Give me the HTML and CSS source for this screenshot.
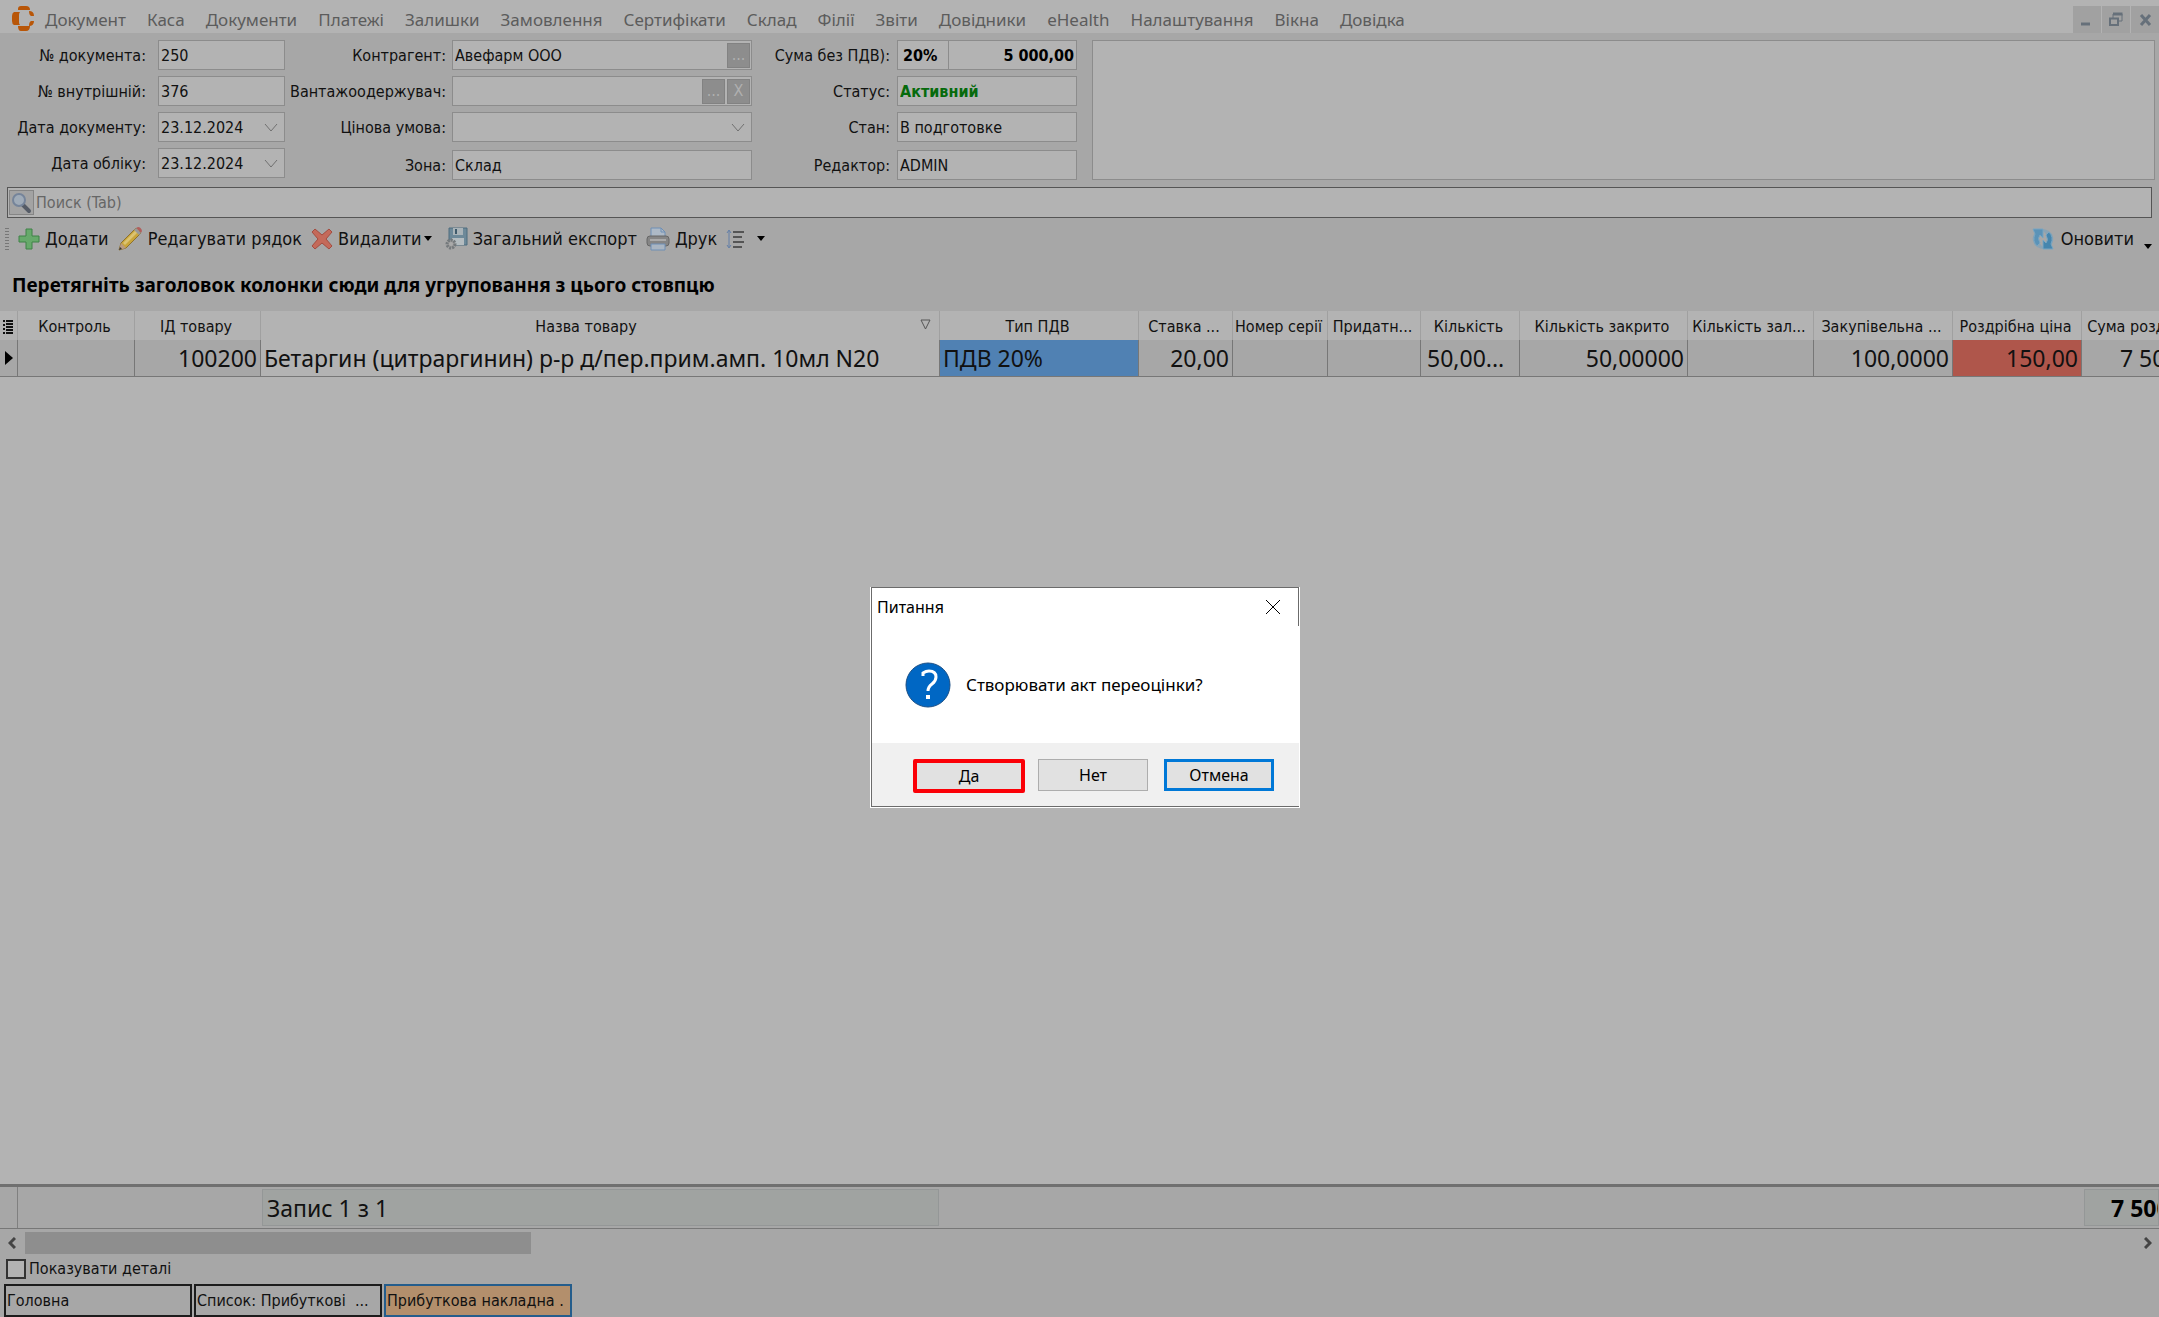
FILE: index.html
```html
<!DOCTYPE html>
<html lang="uk">
<head>
<meta charset="utf-8">
<title>Прибуткова накладна</title>
<link rel="stylesheet" href="styles.css">
</head>
<body>
<header class="menubar">
  <svg class="logo" width="22" height="25" viewBox="0 0 22 25" aria-hidden="true"><path fill="#b85608" d="M6 3Q6 0 9 0h5q4 0 4 4H6zM2 6h6q-1 1-1 3v7q0 2 1 3H2q-2-1-2-4v-5q0-3 2-4zM6 20h12q0 5-4 5H9q-3 0-3-5zM17 5q5 0 5 5h-3q-2-1-2-5zM17 20q0-4 2-5h3q0 5-5 5z"/></svg>
  <nav class="menu">
    <a href="#">Документ</a><a href="#">Каса</a><a href="#">Документи</a><a href="#">Платежі</a><a href="#">Залишки</a><a href="#">Замовлення</a><a href="#">Сертифікати</a><a href="#">Склад</a><a href="#">Філії</a><a href="#">Звіти</a><a href="#">Довідники</a><a href="#">eHealth</a><a href="#">Налаштування</a><a href="#">Вікна</a><a href="#">Довідка</a>
  </nav>
  <div class="window-buttons">
    <button type="button" aria-label="Згорнути"><svg width="28" height="27" viewBox="0 0 28 27"><path d="M8 18h9" stroke="#66707a" stroke-width="3"/></svg></button>
    <button type="button" aria-label="Відновити"><svg width="28" height="27" viewBox="0 0 28 27"><path d="M11 12V8h9v7h-3" fill="none" stroke="#66707a" stroke-width="1"/><path d="M11 8h9.500" stroke="#66707a" stroke-width="3"/><path d="M8 12.500h8V19H8z" fill="none" stroke="#66707a" stroke-width="2"/></svg></button>
    <button type="button" aria-label="Закрити"><svg width="28" height="27" viewBox="0 0 28 27"><path d="M10 9l9 10M19 9l-9 10" stroke="#66707a" stroke-width="3"/></svg></button>
  </div>
</header>

<form class="details">
  <div class="fields fields-document">
    <label for="number">№ документа:</label><input id="number" value="250">
    <label for="inner">№ внутрішній:</label><input id="inner" value="376">
    <label for="date">Дата документу:</label>
    <div class="combo"><input id="date" value="23.12.2024"><svg width="14" height="9" viewBox="0 0 14 9"><path d="M1 1l6 7 6-7"/></svg></div>
    <label for="account">Дата обліку:</label>
    <div class="combo"><input id="account" value="23.12.2024"><svg width="14" height="9" viewBox="0 0 14 9"><path d="M1 1l6 7 6-7"/></svg></div>
  </div>
  <div class="fields fields-partner">
    <label for="partner">Контрагент:</label>
    <div class="combo"><input id="partner" value="Авефарм ООО"><button type="button">...</button></div>
    <label for="receiver">Вантажоодержувач:</label>
    <div class="combo"><input id="receiver"><button type="button">...</button><button type="button">X</button></div>
    <label for="price">Цінова умова:</label>
    <div class="combo"><input id="price"><svg width="14" height="9" viewBox="0 0 14 9"><path d="M1 1l6 7 6-7"/></svg></div>
    <label for="zone">Зона:</label><input id="zone" value="Склад">
  </div>
  <div class="fields fields-state">
    <label for="rate">Сума без ПДВ):</label>
    <div class="combo sum"><input id="rate" class="rate" value="20%"><input class="amount" aria-label="Сума" value="5 000,00"></div>
    <label for="status">Статус:</label><input id="status" class="status" value="Активний">
    <label for="state">Стан:</label><input id="state" value="В подготовке">
    <label for="editor">Редактор:</label><input id="editor" value="ADMIN">
  </div>
  <textarea class="memo" aria-label="Примітка"></textarea>
</form>

<div class="search">
  <button type="button" aria-label="Пошук"><svg width="22" height="23" viewBox="0 0 22 23"><path d="M13 14l6 6" stroke="#555b66" stroke-width="4" stroke-linecap="round"/><circle cx="9" cy="9" r="6" fill="#9fabb8" stroke="#75849a" stroke-width="2"/></svg></button>
  <input aria-label="Пошук" placeholder="Поиск (Tab)">
</div>

<div class="toolbar">
  <span class="grip"></span>
  <button type="button"><svg width="22" height="22" viewBox="0 0 22 22"><path d="M8 1h6v7h7v6h-7v7H8v-7H1V8h7z" fill="#67a96b" stroke="#3f8247" stroke-linejoin="round"/></svg><span>Додати</span></button>
  <button type="button"><svg width="25" height="25" viewBox="0 0 25 25"><path d="M1 24l2-7L18 2l5 5L8 22z" fill="#c9a53a" stroke="#8d7130"/><path d="M5 17L19 3l2 2L7 19z" fill="#dcc371"/><path d="M1 24l2-7 5 5z" fill="#b99b82"/><path d="M1 24l1-3 2 2z" fill="#333"/><path d="M18 2l2-1q3 0 4 4l-1 2z" fill="#b15f5c"/><path d="M16 4l5 5 2-2-5-5z" fill="#999"/></svg><span>Редагувати рядок</span></button>
  <button type="button" class="delete"><svg width="22" height="22" viewBox="0 0 22 22"><path d="M1 4l3-3 7 6 7-6 3 3-6 7 6 7-3 3-7-6-7 6-3-3 6-7z" fill="#c46a5a" stroke="#a44c40" stroke-linejoin="round"/></svg><span>Видалити</span><svg width="8" height="6" viewBox="0 0 8 6"><path d="M0 0h8L4 5z"/></svg></button>
  <button type="button"><svg width="23" height="24" viewBox="0 0 23 24"><path d="M4 1h18v17H4z" fill="#6d8999" stroke="#4f6c7e"/><path d="M8 1h10v7H8z" fill="#a9b3b8"/><path d="M10 2h2v5h-2z" fill="#3e5a6b"/><path d="M7 11h12v7H7z" fill="#b4bcc0"/><circle cx="6" cy="17" r="4" fill="#999" stroke="#74797c" stroke-width="3" stroke-dasharray="2 1"/><circle cx="6" cy="17" r="2" fill="#aaa"/></svg><span>Загальний експорт</span></button>
  <button type="button"><svg width="24" height="24" viewBox="0 0 24 24"><path d="M5 1h10l4 4v6H5z" fill="#adb9c6" stroke="#6f8fb5"/><path d="M15 1v4h4" fill="none" stroke="#6f8fb5"/><rect x="1" y="9" width="22" height="10" rx="3" fill="#858585" stroke="#666"/><path d="M4 13h16" stroke="#aaa" stroke-width="2"/><path d="M5 17h14v6H5z" fill="#a9b5c2" stroke="#6f8fb5"/></svg><span>Друк</span></button>
  <button type="button" class="spacing" aria-label="Інтервал"><svg width="19" height="20" viewBox="0 0 19 20"><path d="M3 2v16M1 4l2-3 2 3M1 16l2 3 2-3" fill="none" stroke="#637fa8"/><path d="M7 3h11M7 8h9M7 13h11M7 18h9" stroke="#555" stroke-width="2"/></svg><svg width="8" height="6" viewBox="0 0 8 6"><path d="M0 0h8L4 5z"/></svg></button>
  <button type="button" class="refresh"><svg width="22" height="22" viewBox="0 0 22 22"><path d="M9 1q10 0 12 8 1 5-2 8l-4-4q2-5-2-8z" fill="#8ba3b3"/><path d="M13 21Q3 21 1 13q-1-4 1-7l5 4q-1 4 2 7z" fill="#8ba3b3"/><path d="M1 1h10v9L8 7q-3 3 0 8l-3 3Q0 13 3 6z" fill="#5b93b8" stroke="#78a5c2"/><path d="M21 21H11v-9l3 3q3-3 0-8l3-3q5 5 2 12z" fill="#4686ae" stroke="#78a5c2"/></svg><span>Оновити</span></button>
  <button type="button" class="overflow" aria-label="Ще"><svg width="8" height="6" viewBox="0 0 8 6"><path d="M0 0h8L4 5z"/></svg></button>
</div>

<p class="group-hint">Перетягніть заголовок колонки сюди для угруповання з цього стовпцю</p>

<main class="grid">
  <table>
    <colgroup><col class="c-mark"><col class="c-control"><col class="c-id"><col class="c-name"><col class="c-type"><col class="c-rate"><col class="c-series"><col class="c-expiry"><col class="c-qty"><col class="c-closed"><col class="c-rest"><col class="c-cost"><col class="c-retail"><col class="c-total"></colgroup>
    <thead><tr>
      <th><svg width="10" height="14" viewBox="0 0 10 14"><path d="M0 1h2M0 5h2M0 9h2M0 13h2M3 1h7M3 4h7M3 7h7M3 10h7M3 13h7" stroke="#111" stroke-width="2"/></svg></th>
      <th>Контроль</th><th>ІД товару</th>
      <th class="sorted">Назва товару<svg width="11" height="12" viewBox="0 0 11 12"><path d="M1 1h9L5.500 10z" fill="none" stroke="#555"/></svg></th>
      <th>Тип ПДВ</th><th>Ставка ...</th><th>Номер серії</th><th>Придатн...</th><th>Кількість</th><th>Кількість закрито</th><th>Кількість зал...</th><th>Закупівельна ...</th><th>Роздрібна ціна</th><th>Сума роздрібна</th>
    </tr></thead>
    <tbody><tr>
      <td class="mark"><svg width="8" height="14" viewBox="0 0 8 14"><path d="M0 0l8 7-8 7z"/></svg></td>
      <td></td><td class="num">100200</td><td class="name">Бетаргин (цитраргинин) р-р д/пер.прим.амп. 10мл N20</td><td class="type">ПДВ 20%</td><td class="num">20,00</td><td></td><td></td><td class="quantity">50,00...</td><td class="num">50,00000</td><td></td><td class="num">100,0000</td><td class="num retail">150,00</td><td class="num">7 500,00</td>
    </tr></tbody>
  </table>
</main>

<div class="summary">
  <span class="summary-mark"></span>
  <span class="summary-count">Запис 1 з 1</span>
  <span class="summary-total">7 500,00</span>
</div>

<div class="scrollbar">
  <button type="button" aria-label="Ліворуч"><svg width="8" height="12" viewBox="0 0 8 12"><path d="M7 1L2 6l5 5"/></svg></button>
  <span class="thumb"></span>
  <button type="button" aria-label="Праворуч"><svg width="8" height="12" viewBox="0 0 8 12"><path d="M1 1l5 5-5 5"/></svg></button>
</div>

<label class="show-details"><input type="checkbox">Показувати деталі</label>

<footer class="tabs">
  <button type="button">Головна</button>
  <button type="button">Список: Прибуткові&nbsp; ...</button>
  <button type="button" class="active">Прибуткова накладна .</button>
</footer>

<div class="dialog" role="dialog" aria-labelledby="dialog-title">
  <div class="dialog-head"><span id="dialog-title">Питання</span>
    <button type="button" aria-label="Закрити"><svg width="16" height="16" viewBox="0 0 16 16"><path d="M1 1l14 14M15 1L1 15" stroke="#000"/></svg></button></div>
  <div class="dialog-body">
    <svg width="46" height="46" viewBox="0 0 46 46" aria-hidden="true"><circle cx="23" cy="23" r="22" fill="#0067c4" stroke="#1a4f86"/><path d="M18 14V11Q21 9 24 9q7 0 7 6 0 4-4 7-4 3-4 7" fill="none" stroke="#fff" stroke-width="3"/><path d="M21 33h4v4h-4z" fill="#fff"/></svg>
    <span class="question">Створювати акт переоцінки?</span>
  </div>
  <div class="dialog-actions">
    <button type="button" class="yes">Да</button>
    <button type="button">Нет</button>
    <button type="button" class="cancel">Отмена</button>
  </div>
</div>
</body>
</html>
```
FILE: styles.css
```css
* { box-sizing: border-box; }

body {
  margin: 0;
  height: 100vh;
  display: flex;
  flex-direction: column;
  overflow: hidden;
  position: relative;
  background: #a7a7a7;
  color: #111;
  font: 16px/20px "DejaVu Sans Condensed", "DejaVu Sans", sans-serif;
}

button, input, textarea { font: inherit; color: inherit; margin: 0; border-radius: 0; }
button { padding: 0; border: 0; background: none; }
svg { flex: none; display: block; }

/* Menu */
.menubar {
  display: flex;
  height: 33px;
  padding-left: 12px;
  background: #b3b3b3;
  font: 17px/24px "Noto Sans", sans-serif;
}
.logo { margin-top: 6px; }
.menu { display: flex; flex: 1; gap: 21px; padding: 8px 0 0 11px; }
.menu a { color: #5c5c5c; text-decoration: none; white-space: nowrap; }
.window-buttons { display: flex; gap: 1px; padding-top: 6px; }
.window-buttons button { background: #a1a1a1; height: 27px; }

/* Document details */
.details { display: flex; height: 154px; padding: 7px 4px 7px 8px; }
.fields { display: grid; align-items: start; gap: 6px; }
.fields-document { grid-template-columns: 138px 127px; grid-template-rows: repeat(4, 30px); column-gap: 12px; }
.fields-partner { grid-template-columns: 161px 300px; grid-template-rows: 30px 30px 32px 30px; }
.fields-state { grid-template-columns: 138px 180px; grid-template-rows: 30px 30px 32px 30px; column-gap: 7px; margin-right: 15px; }
.fields label { text-align: right; line-height: 31px; white-space: nowrap; }
.fields input, .combo {
  width: 100%;
  height: 30px;
  min-width: 0;
  padding: 0 2px;
  border: 1px solid #8c8c8c;
  background: #b3b3b3;
}
.combo { display: flex; align-items: center; gap: 2px; padding: 0 1px 0 0; }
.combo input { flex: 1; height: 28px; border: 0; background: none; }
.combo svg { margin-right: 5px; fill: none; stroke: #707070; }
.combo button { width: 23px; height: 25px; background: #8d8d8d; border: 1px solid #828282; color: #b0b0b0; line-height: 16px; }
.sum { gap: 0; padding: 0; font-weight: bold; color: #000; }
.sum .rate { flex: none; width: 51px; padding-left: 5px; border-right: 1px solid #8c8c8c; }
.sum .amount { text-align: right; }
.fields .status { font-weight: bold; color: #066a0c; }
.memo { flex: 1; height: 140px; border: 1px solid #8c8c8c; background: #b3b3b3; resize: none; }

/* Search */
.search { display: flex; height: 31px; margin: 0 7px; border: 1px solid #555; background: #b3b3b3; }
.search button { width: 25px; margin: 2px 1px; border: 1px solid #858585; background: #a3a3a3; }
.search input { flex: 1; border: 0; padding: 0 1px; background: none; }
.search input::placeholder { color: #666; opacity: 1; }

/* Toolbar */
.toolbar { display: flex; align-items: center; height: 41px; font-size: 18px; padding-left: 5px; }
.toolbar button { display: flex; align-items: center; gap: 5px; height: 30px; margin-right: 9px; white-space: nowrap; }
.grip { width: 4px; height: 22px; margin-right: 9px; background: repeating-linear-gradient(#777 0 1px, #a7a7a7 1px 3px); }
.toolbar .delete { margin-right: 13px; }
.toolbar .delete svg:last-child { margin-left: -3px; }
.toolbar .spacing { gap: 12px; }
.toolbar .refresh { margin-left: auto; margin-right: 10px; gap: 7px; }
.toolbar .overflow { margin-right: 7px; align-items: flex-end; padding-bottom: 4px; }
.group-hint { margin: 0; padding-left: 12px; height: 52px; font: bold 19px/52px "Noto Sans", sans-serif; color: #000; }

/* Item table */
.grid { flex: 1; min-height: 0; overflow: hidden; background: #b3b3b3; }
table { width: 2215px; table-layout: fixed; border-collapse: separate; border-spacing: 0; }
.c-mark { width: 18px; }
.c-control { width: 117px; }
.c-id { width: 126px; }
.c-name { width: 679px; }
.c-type { width: 199px; }
.c-rate { width: 94px; }
.c-series { width: 95px; }
.c-expiry { width: 93px; }
.c-qty { width: 99px; }
.c-closed { width: 168px; }
.c-rest { width: 126px; }
.c-cost { width: 139px; }
.c-retail { width: 129px; }
.c-total { width: 133px; }
th, td { padding: 0 3px; white-space: nowrap; overflow: hidden; border-right: 1px solid #777; }
th { height: 29px; font-weight: normal; border-right-color: #a0a0a0; padding: 2px 3px 0 0; }
th:first-child svg { margin-left: 3px; }
.sorted { position: relative; padding-right: 28px; }
.sorted svg { position: absolute; right: 8px; top: 8px; }
td { height: 37px; font: 23px/34px "Noto Sans", sans-serif; background: #a7a7a7; border-bottom: 1px solid #777; text-align: left; }
td.num { text-align: right; }
td.name { background: #b3b3b3; }
td.type { background: #5081b3; }
td.retail { background: #af564b; }
td.mark { padding-left: 5px; }
td.quantity { padding-left: 6px; }

/* Totals and scrolling */
.summary { display: flex; align-items: center; height: 45px; border-top: 3px solid #707070; border-bottom: 1px solid #777; font: 23px/37px "Noto Sans", sans-serif; }
.summary-mark { width: 18px; align-self: stretch; border-right: 1px solid #808080; }
.summary-count { width: 677px; margin-left: 244px; }
.summary-count, .summary-total { height: 37px; padding-left: 4px; background: #a0a3a1; border: 1px solid #949797; white-space: nowrap; }
.summary-total { width: 75px; margin-left: auto; padding-left: 26px; overflow: hidden; font-weight: bold; color: #000; }
.scrollbar { display: flex; align-items: center; height: 27px; padding: 0 7px 0 8px; }
.scrollbar svg { fill: none; stroke: #444; stroke-width: 3px; }
.scrollbar .thumb { width: 506px; height: 22px; margin: 0 auto 0 9px; background: #8e8e8e; }

.show-details { display: flex; align-items: center; gap: 3px; height: 26px; padding-left: 6px; }
.show-details input { appearance: none; width: 20px; height: 20px; margin: 0; border: 2px solid #333; background: #b3b3b3; }

/* Window tabs */
.tabs { display: flex; gap: 2px; height: 35px; padding: 2px 0 0 4px; }
.tabs button { width: 188px; padding: 0 1px; border: 2px solid #1c1c1c; text-align: left; white-space: nowrap; overflow: hidden; }
.tabs .active { border-color: #245d8c; background: #b38f6c; }

/* Question dialog */
.dialog {
  position: absolute;
  left: 870px;
  top: 587px;
  width: 430px;
  border: 1px solid #fff;
  border-top: 0;
  background: #fff;
  color: #000;
  font: 16px/22px "Noto Sans", sans-serif;
}
.dialog-head { display: flex; justify-content: space-between; align-items: center; height: 39px; padding: 0 17px 0 5px; border: 1px solid #6b6b6b; border-bottom: 0; }
.dialog-body { display: flex; align-items: center; gap: 15px; height: 117px; padding-left: 33px; border-left: 1px solid #6b6b6b; }
.question { font-size: 17px; }
.dialog-actions { display: flex; gap: 13px; height: 64px; padding: 16px 0 0 41px; background: #f0f0f0; border-left: 1px solid #6b6b6b; border-bottom: 1px solid #6b6b6b; }
.dialog-actions button { width: 110px; height: 32px; border: 1px solid #adadad; background: #e1e1e1; }
.dialog-actions .yes { width: 112px; height: 34px; border: 4px solid #fb0007; border-radius: 2px; }
.dialog-actions .cancel { border: 3px solid #0078d7; margin-left: 3px; }
```
